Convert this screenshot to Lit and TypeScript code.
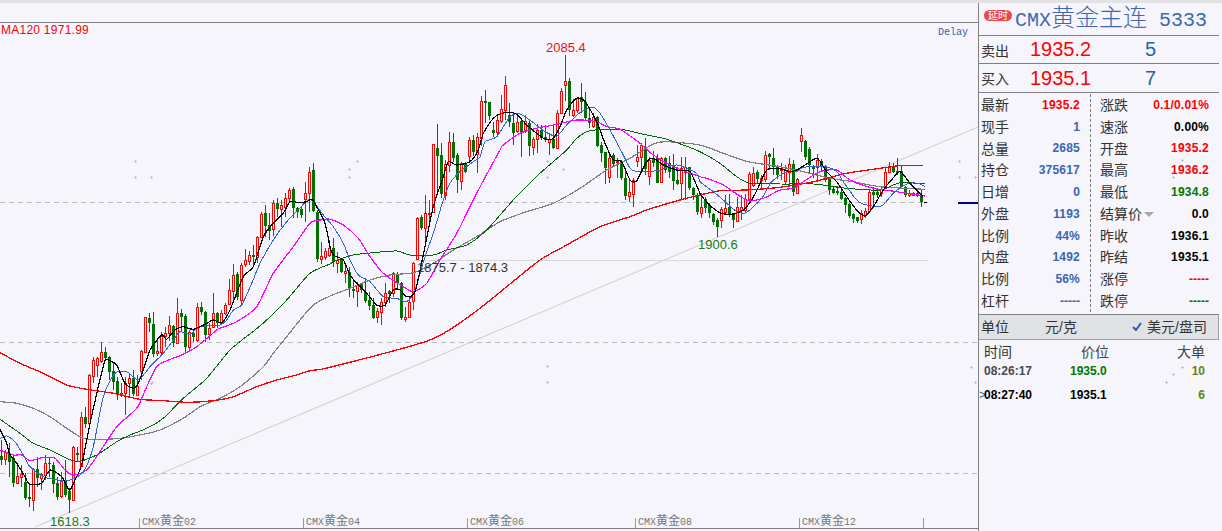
import { LitElement, html, css, svg } from "lit";
import { customElement } from "lit/decorators.js";

type Seg = { x0: number; y0: number; pts: number[] };
const Z3 = { x0: 0, y0: 330 };
const Z7 = { x0: 60, y0: 150 };
const Z4 = { x0: 300, y0: 150 };
const Z5 = { x0: 420, y0: 30 };
const Z6 = { x0: 680, y0: 110 };

function line(...segs: Seg[]): [number, number][] {
  const out: [number, number][] = [];
  for (const s of segs) {
    for (let i = 0; i < s.pts.length; i += 2) {
      const x = s.x0 + s.pts[i] / 3;
      const y = s.y0 + s.pts[i + 1] / 3;
      if (!out.length || x > out[out.length - 1][0] + 1) out.push([x, y]);
    }
  }
  return out;
}
function smooth(p: [number, number][]): string {
  let d = `M${p[0][0].toFixed(1)} ${p[0][1].toFixed(1)}`;
  for (let i = 0; i < p.length - 1; i++) {
    const a = p[Math.max(0, i - 1)], b = p[i], c = p[i + 1], e = p[Math.min(p.length - 1, i + 2)];
    const k = 0.12;
    d += `C${(b[0] + (c[0] - a[0]) * k).toFixed(1)} ${(b[1] + (c[1] - a[1]) * k).toFixed(1)} ${(c[0] - (e[0] - b[0]) * k).toFixed(1)} ${(c[1] - (e[1] - b[1]) * k).toFixed(1)} ${c[0].toFixed(1)} ${c[1].toFixed(1)}`;
  }
  return d;
}
const LINES: { c: string; w: number; p: [number, number][] }[] = [
  { c: "#808080", w: 1.2, p: line(
    { ...Z3, pts: [0,215,50,220,100,235,150,260,200,295,250,325,300,328,360,325,420,315,480,300,550,265,600,230,660,205,720,170,790,110] },
    { ...Z7, pts: [530,710,590,660,640,610,680,560,720,510,760,465,810,438] },
    { ...Z4, pts: [90,430,150,415,210,390,270,375,340,368,400,340,460,300,530,260,600,215,680,185,760,160,840,115,920,60,990,25] },
    { ...Z5, pts: [300,545,380,528,420,512,470,490,540,430,620,380,700,342,740,335,840,345] },
    { ...Z6, pts: [60,105,130,130,205,155,300,170,370,185,450,205,520,215,600,230,735,238] }) },
  { c: "#006a00", w: 1, p: line(
    { ...Z3, pts: [0,268,60,310,100,340,150,360,200,385,235,395,290,375,350,335,390,315,440,295,490,265,550,205,620,145,690,60,765,0] },
    { ...Z7, pts: [305,810,370,750,430,690,490,630,550,570,620,510,680,450,750,370,810,342] },
    { ...Z4, pts: [30,365,100,335,160,315,220,308,290,303,330,315,400,315,440,300,500,285,560,240,640,150,720,70,800,0] },
    { ...Z5, pts: [245,570,340,460,430,370,470,325,510,302,600,298,680,315,730,325,790,345,840,365] },
    { ...Z6, pts: [50,125,120,160,170,200,210,220,300,222,400,222,450,228,500,235,600,240,660,218,735,222] }) },
  { c: "#ff0000", w: 1.3, p: line(
    { ...Z3, pts: [0,68,60,100,130,130,200,165,260,178,340,190,420,208,490,212,560,217,640,212,700,200,770,170,830,150,890,135,930,122,990,112] },
    { ...Z4, pts: [390,570,520,490,620,410,720,330,800,285,900,230,990,200] },
    { ...Z5, pts: [680,540,780,510,840,495] },
    { ...Z6, pts: [60,252,120,242,200,240,300,232,400,215,500,190,600,175,660,167,730,167] }) },
  { c: "#ff00ff", w: 1.2, p: line(
    { ...Z3, pts: [0,360,40,375,65,375,90,392,130,382,165,385,195,420,220,435,260,420,300,365,350,290,410,235,440,170,470,110,500,92,545,75,590,50,650,0] },
    { ...Z7, pts: [195,810,240,750,270,670,320,630,400,605,440,570,480,535,530,515,590,470,640,370,700,290,750,220,780,210] },
    { ...Z4, pts: [40,212,90,208,130,225,175,265,210,320,250,370,310,410,340,425,380,400,420,330,470,250,530,130,600,0] },
    { ...Z5, pts: [210,400,250,345,300,310,350,295,400,285,470,270,530,275,560,290,600,298,660,340,700,375,760,410,840,440] },
    { ...Z6, pts: [40,190,80,205,130,225,200,270,250,265,300,240,340,235,370,215,420,185,470,180,510,210,580,235,650,245,735,258] }) },
  { c: "#2f66d0", w: 1, p: line(
    { ...Z3, pts: [0,325,20,318,45,335,70,375,90,410,130,440,175,450,210,450,250,425,280,350,310,200,345,130,380,125,415,150,450,110,490,70] },
    { ...Z7, pts: [175,680,195,665,215,672,245,690,300,640,340,570,360,545,390,553,420,530,480,525,500,510,520,480,545,465,575,400,600,340,640,270,680,215,715,180,750,148,790,195] },
    { ...Z4, pts: [65,195,100,230,130,280,150,330,175,375,210,395,250,440,290,445,320,455,345,420,375,320,400,250,430,150,450,100,480,65,520,35,540,20] },
    { ...Z5, pts: [120,430,170,390,195,335,230,320,270,260,300,252,340,278,375,305,410,318,440,285,480,248,520,232,540,250,570,300,610,375,635,420,680,425,720,420,770,405,830,430] },
    { ...Z6, pts: [25,175,60,215,100,245,130,270,170,305,200,307,245,265,275,215,320,185,350,185,370,172,435,170,470,185,490,215,530,270,560,285,605,287,640,250,680,222,715,220,735,230] }) },
  { c: "#000000", w: 1.2, p: line(
    { ...Z3, pts: [0,298,20,340,28,370,50,400,75,440,88,462,125,460,150,420,185,440,208,480,225,450,245,405,268,290,295,170,315,92,330,92,350,105,375,160,400,175,412,165,430,120,450,60,485,15] },
    { ...Z7, pts: [225,712,245,665,290,575,320,568,345,540,370,530,400,538,440,520,460,510,485,518,510,480,550,380,580,350,610,260,640,220,670,190,690,155,715,158,740,155,755,148,770,170,795,220,810,290] },
    { ...Z4, pts: [75,250,100,315,130,330,150,375,175,405,200,430,230,465,255,465,280,420,300,420,320,440,345,425,375,290,400,170,430,80,445,35,470,45,510,35,535,0] },
    { ...Z5, pts: [125,395,165,395,190,310,220,265,245,250,285,250,320,285,350,310,375,327,400,325,420,290,440,240,470,205,495,215,530,275,555,340,580,390,605,395,630,450,650,452,680,395,700,385,730,405,770,420,810,425,840,490] },
    { ...Z6, pts: [50,230,75,270,100,295,125,310,160,312,190,300,215,270,235,232,260,180,295,175,330,185,350,180,375,165,412,145,440,185,470,215,500,260,530,300,555,318,580,290,610,240,630,215,660,185,690,220,730,260] }) },
];

// Candles: kind, high, top, bottom, low, in crop units (3 per pixel).
const C3 = "g330,378,390,405 r360,366,388,405 g340,368,395,440 g375,385,458,470 r405,438,458,460 r405,432,440,470 g430,455,505,510 g460,502,507,530 r415,418,510,542 g380,418,445,470 r430,433,445,480 r375,400,435,450 g380,398,403,440 g395,405,462,490 g440,460,500,510 r425,452,498,505 g390,452,495,500 g475,482,510,548 r348,350,510,512 g350,368,375,395 r245,262,408,410 g230,262,282,295 r132,135,280,282";
const C7 = "r622,630,678,700 r620,625,645,680 r576,606,632,640 g590,606,625,632 g618,622,665,690 g640,663,695,720 g680,692,732,750 r700,728,735,740 r680,700,728,795 r672,685,698,740 g660,684,732,738 r675,708,735,738 r600,603,662,690 r500,502,605,605 g490,505,520,545 g487,522,612,620 r565,604,610,618 r545,558,605,612 r530,550,558,590 r498,526,550,572 g525,528,578,590 r445,488,578,580 g478,488,500,545 g492,498,592,608 r540,545,592,605 g540,548,562,575 r460,472,570,575 g455,472,485,495 g482,485,555,575 r520,535,552,570 r430,490,530,530 g485,488,520,535 r480,490,518,520 r458,465,490,495 r388,420,462,465 r342,376,422,460 g365,372,442,450 r340,346,450,465 r298,330,342,350 r302,316,332,345 g285,315,320,350 r258,260,320,340 r186,192,262,265 g166,188,228,262 g190,226,242,270 r150,160,238,258 g145,158,178,200 r150,165,177,230 r130,145,170,200 r115,120,145,160 g112,116,175,205 g170,175,185,205 g170,176,195,205 r95,128,146,215 r50,65,130,185 g40,60,182,185 g180,185,328,335 r275,318,326,342 r295,302,320,330 r270,295,316,320";
const C4 = "g265,295,335,352 r305,330,338,368 g325,328,365,368 r345,362,370,400 g350,365,415,440 g390,418,422,445 r395,405,422,472 g400,402,420,430 g385,425,452,460 g425,450,468,480 g445,465,505,508 r475,484,502,520 r445,455,485,525 r400,428,455,470 g420,423,432,460 r365,370,430,440 g365,372,400,415 g395,400,505,510 r470,502,508,515 r440,455,502,505 r335,340,452,480 r200,205,328,330 g195,202,235,240 r135,190,235,275 r150,188,190,230";
const C5 = "r342,343,545,548 g282,353,378,495 g340,375,492,505 r390,402,495,510 r305,335,405,425 g310,335,385,395 g370,375,450,488 r395,400,452,480 g395,398,425,430 r320,330,378,400 g315,330,365,378 r310,322,372,428 r198,214,325,348 g180,214,220,280 g215,216,258,270 g275,300,310,320 r258,270,306,320 r196,238,272,280 r138,165,240,270 g220,255,276,290 g250,280,308,345 r255,275,302,310 g265,272,305,382 r255,272,300,310 g270,278,348,378 r320,328,350,375 r283,300,328,370 g285,300,325,330 g285,322,330,335 r310,328,335,375 g285,328,355,358 r240,250,355,358 r175,182,248,250 r75,154,166,212 g145,154,240,258 r208,240,255,262 r200,204,240,248 g158,202,215,250 g185,216,265,270 g235,264,280,295 r248,262,288,295 g258,262,348,350 g335,345,368,395 g365,366,415,462 r368,385,442,458 g370,375,403,410 r385,392,395,445 g390,392,445,450 g420,445,497,510 r450,485,497,515 r445,450,493,530 r345,382,392,412 r338,345,382,422 g325,355,418,435 r380,390,437,465 g362,385,400,410 g372,385,458,460 r380,385,455,460 g380,385,420,428 g378,400,425,445 g372,405,452,480 g410,450,462,465";
const C6 = "r140,175,218,270 r142,170,185,270 g170,172,235,240 g230,235,255,270 g250,255,305,315 r250,292,310,325 g262,268,295,310 g280,285,310,325 g310,312,335,345 g325,330,350,380 r290,298,330,355 r255,295,305,310 g252,292,315,322 g310,312,330,355 r262,290,332,335 r255,290,300,330 r252,268,300,305 r185,192,268,275 r172,190,225,232 g180,185,208,222 r195,205,210,235 r122,136,208,215 g130,133,140,180 g115,145,170,195 g165,168,195,208 r160,175,180,210 r165,180,212,225 r145,162,185,228 g150,162,245,258 r205,208,248,250 r55,75,92,125 g90,92,142,150 g110,118,165,190 g165,172,178,205 r132,150,172,215 g148,152,168,185 g165,168,210,215 g200,208,240,255 g230,238,248,252 g228,242,248,255 g240,245,268,270 g262,265,285,310 g280,282,318,325 g310,312,328,338 g320,322,332,338 r300,310,328,342 r295,302,315,325 r240,246,302,305 g230,246,254,295 g235,246,255,265 r230,238,250,260 r175,186,228,232 r155,170,186,190 g160,168,185,190 g145,182,190,195 g168,184,230,232 g228,230,255,262 r240,250,256,262 r245,250,254,258 r240,248,254,260 g240,256,275,292";

type Candle = { x: number; up: boolean; h: number; t: number; b: number; l: number };
const CANDLES: Candle[] = [];
for (const [src, y0] of [[C3, 330], [C7, 150], [C4, 150], [C5, 30], [C6, 110]] as [string, number][]) {
  for (const item of src.split(" ")) {
    const [h, t, b, l] = item.slice(1).split(",").map((v) => Math.round(y0 + Number(v) / 3));
    CANDLES.push({ x: 1 + 4 * CANDLES.length, up: item[0] === "r", h, t, b, l });
  }
}

const DOTS = [[135,161],[135,177],[151,177],[151,383],[152,382],[357,161],[349,169],[349,177],[547,161],[547,177],[563,169],[547,366],[547,382],[339,366],[959,161],[959,177],[975,177],[975,382],[971,367],[1182,160],[1173,177],[1182,367],[1173,374],[1166,382]];
const TICKS = [
  { x: 139, t: "02" }, { x: 303, t: "04" }, { x: 467, t: "06" }, { x: 635, t: "08" }, { x: 799, t: "12" },
];

const LEFT: [string, string, string][] = [
  ["最新", "1935.2", "red"], ["现手", "1", "blue"], ["总量", "2685", "blue"], ["持仓", "375617", "blue"], ["日增", "0", "blue"],
  ["外盘", "1193", "blue"], ["比例", "44%", "blue"], ["内盘", "1492", "blue"], ["比例", "56%", "blue"], ["杠杆", "-----", "blue dash"],
];
const RIGHT: [string, string, string][] = [
  ["涨跌", "0.1/0.01%", "red"], ["速涨", "0.00%", "black"], ["开盘", "1935.2", "red"], ["最高", "1936.2", "red"], ["最低", "1934.8", "green"],
  ["结算价", "0.0", "black"], ["昨收", "1936.1", "black"], ["昨结", "1935.1", "black"], ["涨停", "-----", "red dash"], ["跌停", "-----", "green dash"],
];

@customElement("app-root")
export class AppRoot extends LitElement {
  static styles = css`
    :host { display: block; width: 1222px; height: 531px; position: relative; overflow: hidden; background: #f5f5fb;
      font-family: "Liberation Sans", "Noto Sans CJK SC", sans-serif; color: #333; }
    .band { height: 3px; background: #e2e2e4; }
    .main { display: flex; height: 528px; }
    .chart { display: block; width: 978px; height: 528px; flex: none; }
    .chart text { font-family: "Liberation Sans", "Noto Sans CJK SC", sans-serif; font-size: 13px; }
    .chart text.ma { font-size: 12px; letter-spacing: 0.25px; }
    .chart .axis { font-family: "Liberation Mono", "Noto Sans CJK SC", monospace; font-size: 10px; fill: #777; }
    .chart .axis .cjk { font-size: 12px; font-family: "Noto Sans CJK SC", sans-serif; }
    .chart .delay { font-family: "Liberation Mono", monospace; font-size: 10px; fill: #2a64b4; }
    .panel { width: 242px; flex: none; border-left: 1px solid #808080; display: flex; flex-direction: column; height: 528px; box-sizing: border-box; }
    .head { height: 32px; display: flex; align-items: center; padding-left: 5px; box-sizing: border-box; color: #3f69ad; }
    .badge { width: 28px; height: 11px; line-height: 11px; margin-top: -7px; border-radius: 6px; background: #ec4848; color: #fff; font-size: 10px; text-align: center; flex: none; }
    .title { margin-left: 3px; font-size: 20px; line-height: 32px; white-space: nowrap; display: flex; align-items: baseline; }
    .mono { font-family: "Liberation Mono", monospace; font-size: 20px; }
    .cjk24 { font-size: 24px; font-weight: 300; line-height: 32px; letter-spacing: 0; }
    .code { margin-left: 12px; }
    .quote { display: grid; grid-template-columns: 49px 115px 1fr; align-items: center; height: 29px; box-sizing: border-box; border-top: 1px solid #808080; padding-left: 2px; margin-right: 1px; font-size: 14px; }
    .quote.first { height: 28px; }
    .quote .p { font-size: 20px; color: #f00; }
    .quote .n { font-size: 20px; color: #2f5fa8; }
    .data { display: grid; grid-template-columns: 111px 1fr; border-top: 1px solid #808080; height: 222px; box-sizing: border-box; padding-top: 1px; margin-right: 1px; }
    .col { display: grid; grid-auto-rows: 21.8px; padding-left: 2px; padding-right: 10px; }
    .col.r { border-left: 1px dashed #808080; padding-left: 9px; padding-right: 10px; height: 218px; }
    .row { display: flex; justify-content: space-between; align-items: center; font-size: 14px; white-space: nowrap; }
    .row > span { margin-bottom: 2px; }
    .row b { font-size: 12px; font-weight: 700; letter-spacing: 0.2px; }
    .row b.dash { letter-spacing: 0; }
    .red { color: #f00; } .blue { color: #3a66b0; } .black { color: #000; } .green { color: #007800; }
    .lab { display: inline-flex; align-items: center; }
    .tri { width: 0; height: 0; border-left: 5px solid transparent; border-right: 5px solid transparent; border-top: 5px solid #a8a8a8; margin-left: 2px; margin-top: 3px; }
    .unit { height: 26px; box-sizing: border-box; background: #e1e2e6; border-top: 1px solid #808080; border-bottom: 1px solid #a0a0a0; margin-right: 1px; border-right: 1px solid #a0a0a0; display: grid; grid-template-columns: 64px 87px 1fr; align-items: center; padding-left: 2px; padding-bottom: 2px; font-size: 14px; }
    .check { display: flex; align-items: center; gap: 5px; }
    .check svg { width: 10px; height: 9px; }
    .ticks { display: grid; grid-template-columns: 86px 39px 96px; grid-template-rows: 19px 22px 26px; padding: 1px 0 0 5px; align-items: center; font-size: 14px; }
    .ticks .hp { text-align: right; color: #444; }
    .ticks .hb { text-align: right; color: #444; }
    .ticks b { font-size: 12px; font-weight: 700; }
    .ticks .tm1 { color: #4a4a4a; }
    .ticks .big { text-align: right; color: #5a8a10; }
    .arr { color: #2a5db0; font-weight: 400; display: inline-block; width: 5px; margin-left: -5px; }
    .dots { position: absolute; left: 0; top: 0; pointer-events: none; }
  `;

  private chart() {
    return svg`
      <line x1="35" y1="527" x2="978" y2="127" stroke="#cfcdc4" stroke-width="1" />
      <g shape-rendering="crispEdges">
        <rect x="0" y="22" width="978" height="1" fill="#808080" />
        <line x1="0" y1="202.5" x2="928" y2="202.5" stroke="#bcbcbc" stroke-dasharray="5 4" />
        <line x1="0" y1="342.5" x2="978" y2="342.5" stroke="#bcbcbc" stroke-dasharray="5 4" />
        <line x1="0" y1="473.5" x2="978" y2="473.5" stroke="#bcbcbc" stroke-dasharray="5 4" />
        <line x1="414" y1="260.5" x2="928" y2="260.5" stroke="#d8d8d8" />
        <rect x="0" y="528" width="978" height="1" fill="#808080" />
        <rect x="958" y="202" width="20" height="1.5" fill="#00008b" />
        <rect x="924" y="202" width="3" height="1" fill="#000" />
        ${CANDLES.map((c) => {
          const mid = c.x + 0.5;
          const color = c.up ? "#ff0000" : "#007000";
          return svg`
            <line x1=${mid} x2=${mid} y1=${c.h} y2=${c.l} stroke=${color} />
            ${c.up
              ? svg`<rect x=${c.x - 1 + 0.5} y=${c.t + 0.5} width="2" height=${Math.max(1, c.b - c.t)} fill="#f5f5fb" stroke=${color} />`
              : svg`<rect x=${c.x - 1} y=${c.t} width="3" height=${Math.max(1, c.b - c.t)} fill=${color} />`}`;
        })}
        ${TICKS.map((t) => svg`<line x1=${t.x + 0.5} x2=${t.x + 0.5} y1="518" y2="528" stroke="#999" />`)}
        <line x1="923.5" x2="923.5" y1="518" y2="528" stroke="#999" />
        ${LINES.map((l) => svg`<path d=${smooth(l.p)} fill="none" stroke=${l.c} stroke-width=${l.w} stroke-linejoin="round" />`)}
      </g>
      <text x="1" y="34" fill="#f00" class="ma">MA120 1971.99</text>
      <text x="938" y="35" class="delay">Delay</text>
      <text x="546" y="52" fill="#f01010">2085.4</text>
      <text x="698" y="249" fill="#1a7a1a">1900.6</text>
      <text x="50" y="526" fill="#1a7a1a">1618.3</text>
      <text x="417" y="272" fill="#333">1875.7 - 1874.3</text>
      ${TICKS.map((t) => svg`<text x=${t.x + 3} y="525" class="axis">CMX<tspan class="cjk">黄金</tspan>${t.t}</text>`)}
    `;
  }

  render() {
    return html`
      <div class="band"></div>
      <div class="main">
        <svg class="chart" viewBox="0 3 978 528">${this.chart()}</svg>
        <div class="panel">
          <div class="head">
            <span class="badge">延时</span>
            <span class="title"><span class="mono">CMX</span><span class="cjk24">黄金主连</span><span class="mono code">5333</span></span>
          </div>
          <div class="quote first"><span>卖出</span><span class="p">1935.2</span><span class="n">5</span></div>
          <div class="quote"><span>买入</span><span class="p">1935.1</span><span class="n">7</span></div>
          <div class="data">
            <div class="col">${LEFT.map((r) => html`<div class="row"><span>${r[0]}</span><b class=${r[2]}>${r[1]}</b></div>`)}</div>
            <div class="col r">${RIGHT.map((r) => html`<div class="row"><span class="lab">${r[0]}${r[0] === "结算价" ? html`<i class="tri"></i>` : ""}</span><b class=${r[2]}>${r[1]}</b></div>`)}</div>
          </div>
          <div class="unit">
            <span>单位</span><span>元/克</span>
            <span class="check"><svg viewBox="0 0 10 9"><path d="M1 5l3 3 5-7" fill="none" stroke="#2a5db0" stroke-width="2" /></svg>美元/盘司</span>
          </div>
          <div class="ticks">
            <span>时间</span><span class="hp">价位</span><span class="hb">大单</span>
            <b class="tm1">08:26:17</b><b class="green">1935.0</b><b class="big">10</b>
            <b class="black"><span class="arr">&gt;</span>08:27:40</b><b class="black">1935.1</b><b class="big">6</b>
          </div>
        </div>
      </div>
      <svg class="dots" width="1222" height="531" viewBox="0 0 1222 531">
        ${DOTS.map((d) => svg`<path d="M${d[0] - 1} ${d[1] + 0.5}h3M${d[0] + 0.5} ${d[1] - 1}v3" stroke="#c4c4c8" stroke-width="1" shape-rendering="crispEdges" />`)}
      </svg>
    `;
  }
}
